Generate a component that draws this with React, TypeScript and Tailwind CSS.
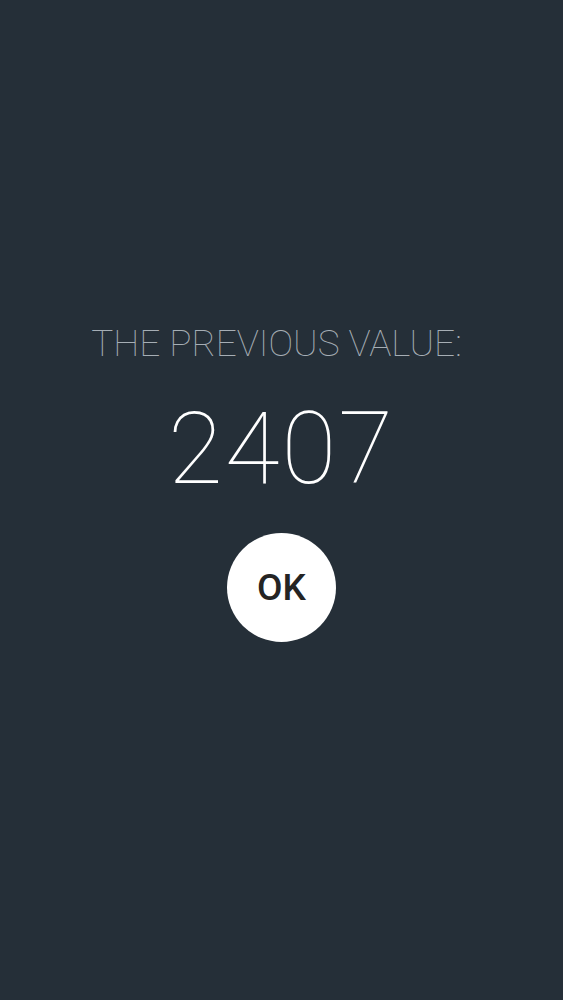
export default function App() {
  return (
    <div className="min-h-screen w-full bg-[#252f38] flex flex-col items-center pt-[320px] font-['Roboto',sans-serif]">
      <div className="mr-[10px] text-[37px] leading-[48px] font-thin text-[#a6aeb5]">THE PREVIOUS VALUE:</div>
      <div className="mt-[31px] text-[100px] leading-[100px] font-thin tracking-[2px] text-white">2407</div>
      <button className="mt-[34px] w-[109px] h-[109px] rounded-full bg-white flex items-center justify-center text-[37px] font-medium text-[#242424]">
        OK
      </button>
    </div>
  );
}
